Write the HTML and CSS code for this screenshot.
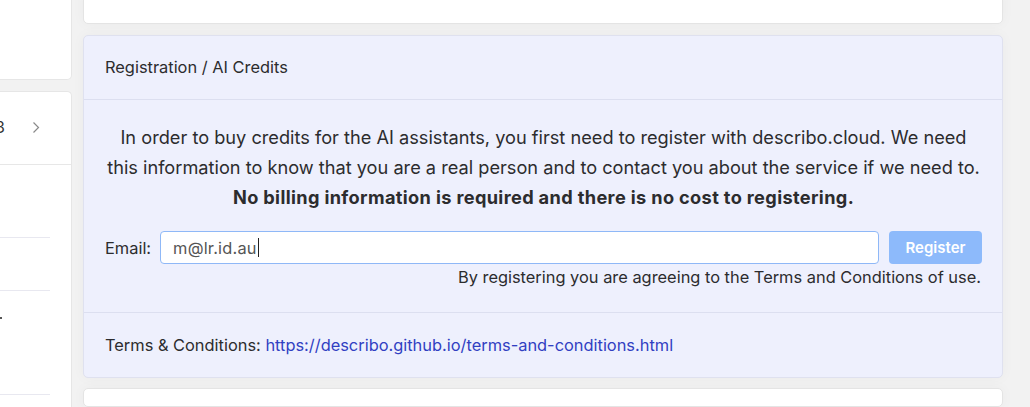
FILE: index.html
```html
<!DOCTYPE html>
<html lang="en">
<head>
<meta charset="utf-8">
<title>Registration / AI Credits</title>
<link rel="stylesheet" href="styles.css">
</head>
<body>
<div class="layout">
  <aside class="sidebar">
    <div class="side-card side-top"></div>
    <div class="side-card side-list">
      <div class="side-head">
        <span class="side-num">3</span>
        <svg class="chev" width="8" height="13" viewBox="0 0 8 13"><path d="M1.5 1.5 L6.5 6.5 L1.5 11.5" fill="none" stroke="#8a8a8a" stroke-width="1.2"/></svg>
      </div>
      <div class="side-row r1"></div>
      <div class="side-row r2"></div>
      <div class="side-row r3"><span class="mark m1"></span></div>
      <div class="side-row r4"><span class="mark m2"></span></div>
    </div>
  </aside>
  <main class="main">
    <div class="card card-top"></div>
    <section class="card card-reg">
      <header class="card-header">Registration / AI Credits</header>
      <div class="card-body">
        <p class="intro">In order to buy credits for the AI assistants, you first need to register with describo.cloud. We need<br>this information to know that you are a real person and to contact you about the service if we need to.<br><strong>No billing information is required and there is no cost to registering.</strong></p>
        <div class="email-row">
          <label class="email-label">Email:</label>
          <div class="email-input">m@lr.id.au<span class="caret"></span></div>
          <button class="btn-register" disabled>Register</button>
        </div>
        <p class="note">By registering you are agreeing to the Terms and Conditions of use.</p>
      </div>
      <footer class="card-footer">Terms &amp; Conditions: <a href="#">https://describo.github.io/terms-and-conditions.html</a></footer>
    </section>
    <div class="card card-bottom"></div>
  </main>
</div>
</body>
</html>
```
FILE: styles.css
```css
html, body {
  margin: 0;
  padding: 0;
}
body {
  background: #f2f2f2;
  font-family: Inter, "Noto Sans", "Liberation Sans", sans-serif;
  color: #2c2c2e;
  width: 1030px;
  height: 407px;
  overflow: hidden;
}
.layout {
  display: flex;
  gap: 11px;
  height: 407px;
  overflow: hidden;
}
.sidebar {
  width: 72px;
  flex: none;
  display: flex;
  flex-direction: column;
  gap: 11px;
  overflow: hidden;
}
.side-card {
  background: #fff;
  border: 1px solid #e6e6e6;
  border-left: none;
  border-radius: 0 5px 5px 0;
}
.side-top {
  margin-top: -10px;
  height: 88px;
  flex: none;
}
.side-list {
  flex: none;
  border-bottom: none;
  border-radius: 0 5px 0 0;
}
.side-head {
  height: 72px;
  border-bottom: 1px solid #e7e7e7;
  display: flex;
  align-items: center;
}
.side-num {
  font-size: 16px;
  margin-left: -5px;
  margin-top: -2px;
  color: #333;
}
.chev {
  margin-left: 27px;
  margin-top: -2px;
}
.side-row {
  margin-right: 21px;
  border-bottom: 1px solid #e8e8f0;
}
.r1 { height: 72px; }
.r2 { height: 52px; }
.r3 { height: 77px; }
.r4 { height: 60px; }
.mark {
  display: block;
  background: #555;
  height: 2px;
}
.m1 { width: 2px; margin-top: 26px; }
.m2 { width: 4px; margin-top: 27px; }

.main {
  width: 920px;
  flex: none;
  display: flex;
  flex-direction: column;
  gap: 10px;
}
.card {
  border-radius: 5px;
  box-shadow: 0 0 14px rgba(0,0,0,0.035);
}
.card-top {
  background: #fff;
  border: 1px solid #e4e4e4;
  height: 32px;
  margin-top: -10px;
  margin-bottom: 1px;
  flex: none;
}
.card-bottom {
  background: #fff;
  border: 1px solid #e4e4e4;
  flex: 1;
}
.card-reg {
  background: #eef0fd;
  border: 1px solid #dfe1ef;
  flex: none;
}
.card-header {
  padding: 20px 21px;
  font-size: 16.4px;
  line-height: 23px;
  border-bottom: 1px solid #dcdff0;
  color: #2c2c2e;
}
.card-body {
  padding: 22px 20px 23px 21px;
}
.intro {
  margin: 0;
  text-align: center;
  font-size: 18.2px;
  line-height: 30px;
  color: #2c2c2e;
}
.intro strong {
  font-weight: 700;
  letter-spacing: 0.35px;
}
.email-row {
  display: flex;
  align-items: center;
  margin-top: 19px;
}
.email-label {
  font-size: 16.4px;
  margin-right: 9px;
}
.email-input {
  flex: 1;
  height: 31px;
  background: #fff;
  border: 1px solid #8fb8f7;
  border-radius: 4px;
  padding: 0 12px;
  font-size: 16.4px;
  letter-spacing: 0.2px;
  color: #555;
  display: flex;
  align-items: center;
}
.caret {
  display: inline-block;
  width: 1px;
  height: 19px;
  background: #222;
  margin-left: 1px;
}
.btn-register {
  margin-left: 10px;
  width: 93px;
  height: 33px;
  border: none;
  border-radius: 4px;
  background: #8dbafb;
  color: #fff;
  font-family: inherit;
  font-size: 15px;
  font-weight: 600;
  padding: 0;
}
.note {
  margin: 1px 0 0;
  text-align: right;
  font-size: 16.4px;
  line-height: 24px;
  padding-right: 1px;
}
.card-footer {
  padding: 21px 21px 20px;
  font-size: 16.4px;
  line-height: 23px;
  border-top: 1px solid #dcdff0;
}
.card-footer a {
  color: #3140c2;
  text-decoration: none;
}
```
